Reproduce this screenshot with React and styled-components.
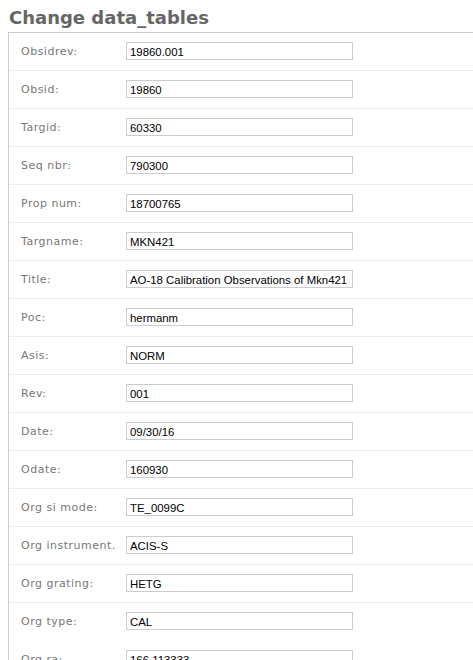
import React from 'react';
import styled, { createGlobalStyle } from 'styled-components';

const GlobalStyle = createGlobalStyle`
    html {
        overflow: hidden;
    }
    body {
        margin: 8px 0 0 8px;
        background: #fff;
        font-family: "DejaVu Sans", sans-serif;
    }
`;

const Container = styled.div`
    width: 100%;
`;
const Title = styled.h1`
    margin: 0;
    height: 24px;
    font-size: 18px;
    font-weight: bold;
    color: #666;
    line-height: 20px;
    padding-left: 1px;
`;
const Fieldset = styled.div`
    border-top: 1px solid #ccc;
    border-left: 1px solid #ccc;
`;
const Row = styled.div`
    display: flex;
    align-items: center;
    height: 37px;
    padding: 0 12px;
    border-bottom: 1px solid ${props => props.last ? 'transparent' : '#eee'};
`;
const Label = styled.label`
    width: 105px;
    flex-shrink: 0;
    font-family: "DejaVu Sans", sans-serif;
    font-size: 11px;
    letter-spacing: 0.5px;
    color: #777;
    margin-top: -1px;
`;
const Input = styled.input`
    box-sizing: border-box;
    width: 227px;
    height: 18px;
    margin-top: -1px;
    padding: 1px 3px 0;
    border: 1px solid #ccc;
    font-family: "Liberation Sans", Arial, sans-serif;
    font-size: 11.4px;
    color: #000;
    background: #fff;
    outline: none;
`;

const fields = [
    ['Obsidrev:', '19860.001'],
    ['Obsid:', '19860'],
    ['Targid:', '60330'],
    ['Seq nbr:', '790300'],
    ['Prop num:', '18700765'],
    ['Targname:', 'MKN421'],
    ['Title:', 'AO-18 Calibration Observations of Mkn421'],
    ['Poc:', 'hermanm'],
    ['Asis:', 'NORM'],
    ['Rev:', '001'],
    ['Date:', '09/30/16'],
    ['Odate:', '160930'],
    ['Org si mode:', 'TE_0099C'],
    ['Org instrument.', 'ACIS-S'],
    ['Org grating:', 'HETG'],
    ['Org type:', 'CAL'],
    ['Org ra:', '166.113333'],
];

const App = () => {
  return (
    <Container>
        <GlobalStyle/>
        <Title>Change data_tables</Title>
        <Fieldset>
            {fields.map(([label, value], i) => (
                <Row key={label} last={i === 15}>
                    <Label>{label}</Label>
                    <Input defaultValue={value} readOnly/>
                </Row>
            ))}
        </Fieldset>
    </Container>
  )
}

export default App
